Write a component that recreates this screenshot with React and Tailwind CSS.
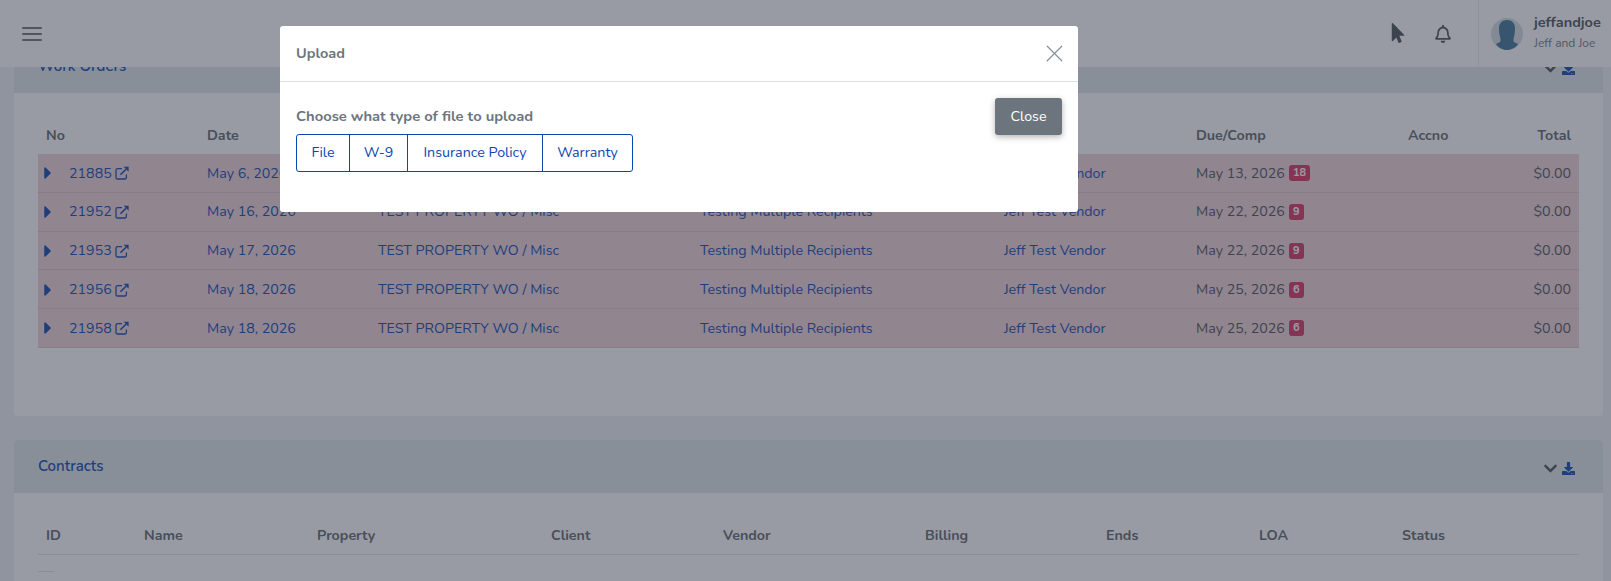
import { FaRegBell, FaCaretRight, FaChevronDown, FaDownload, FaMousePointer } from "react-icons/fa";
import { FiMenu, FiX } from "react-icons/fi";

const workOrders = [
  { no: "21885", date: "May 6, 2026", due: "May 13, 2026", days: 18 },
  { no: "21952", date: "May 16, 2026", due: "May 22, 2026", days: 9 },
  { no: "21953", date: "May 17, 2026", due: "May 22, 2026", days: 9 },
  { no: "21956", date: "May 18, 2026", due: "May 25, 2026", days: 6 },
  { no: "21958", date: "May 18, 2026", due: "May 25, 2026", days: 6 },
];

const contractCols = [
  { label: "ID", w: "w-[98px]" },
  { label: "Name", w: "w-[173px]" },
  { label: "Property", w: "w-[234px]" },
  { label: "Client", w: "w-[172px]" },
  { label: "Vendor", w: "w-[202px]" },
  { label: "Billing", w: "w-[181px]" },
  { label: "Ends", w: "w-[153px]" },
  { label: "LOA", w: "w-[143px]" },
  { label: "Status", w: "w-[100px]" },
];

const fileTypes = [
  { label: "File", w: "w-[52px]" },
  { label: "W-9", w: "w-[58px]" },
  { label: "Insurance Policy", w: "w-[135px]" },
  { label: "Warranty", w: "w-[90px]" },
];

const OpenLinkIcon = () => (
  <svg viewBox="0 0 14 14" className="ml-[3px] h-[14px] w-[14px] shrink-0" fill="none" stroke="currentColor">
    <path d="M7 2.6H2.6a1.6 1.6 0 0 0-1.6 1.6v7.2A1.6 1.6 0 0 0 2.6 13h7.2a1.6 1.6 0 0 0 1.6-1.6V8.4" strokeWidth="1.3" />
    <path d="M5.4 8.8 11 3.2" strokeWidth="1.6" />
    <path d="M8.6 0.8H13.6V5.8Z" fill="currentColor" stroke="none" />
  </svg>
);

const CardHeader = ({ title }) => (
  <div className="flex h-[53px] items-center justify-between rounded-t bg-[#e0e6ea] pl-6 pr-[28px]">
    <h2 className="text-[15px] font-semibold text-[#0b46b0]">{title}</h2>
    <div className="mt-[3px] flex items-center gap-[4px]">
      <FaChevronDown className="h-[15px] w-[15px] text-[#495057]" />
      <FaDownload className="h-[13px] w-[13px] text-[#0b46b0]" />
    </div>
  </div>
);

const WorkOrderRow = ({ row }) => (
  <div className="flex h-[38.75px] items-center border-b border-[#e2bec6] pt-px text-[#0b46b0]">
    <div className="flex w-[169px] items-center pl-[6px]">
      <FaCaretRight className="h-[20px] w-[8px] shrink-0" />
      <span className="ml-[17px]">{row.no}</span>
      <OpenLinkIcon />
    </div>
    <div className="w-[171px]">{row.date}</div>
    <div className="w-[322px]">TEST PROPERTY WO / Misc</div>
    <div className="w-[304px]">Testing Multiple Recipients</div>
    <div className="w-[192px]">Jeff Test Vendor</div>
    <div className="flex w-[212px] items-center text-[#495057]">
      {row.due}
      <span className="ml-[4px] rounded-[3px] bg-[#d63260] px-[4px] text-[11px] leading-[16px] font-bold text-white">{row.days}</span>
    </div>
    <div className="flex-1 pr-2 text-right text-[#495057]">$0.00</div>
  </div>
);

export default function App() {
  return (
    <div className="relative h-[581px] w-full overflow-hidden bg-[#eef0f5] font-['Nunito','Noto_Sans',sans-serif] text-[14.25px] text-[#495057]">
      <div className="flex flex-col gap-6 pl-[14px] pr-2 pt-10">
        <section className="h-[376px] rounded bg-white">
          <CardHeader title="Work Orders" />
          <div className="px-6 pt-[27px]">
            <div className="flex h-[34px] items-start pl-2 pt-[5px] font-bold text-[#5f666d]">
              <span className="w-[161px]">No</span>
              <span className="w-[171px]">Date</span>
              <span className="w-[322px]">Property</span>
              <span className="w-[304px]">Description</span>
              <span className="w-[192px]">Vendor</span>
              <span className="w-[212px]">Due/Comp</span>
              <span className="w-[100px]">Accno</span>
              <span className="flex-1 pr-2 text-right">Total</span>
            </div>
            <div className="bg-[#f0d2d9]">
              {workOrders.map((row) => (
                <WorkOrderRow key={row.no} row={row} />
              ))}
            </div>
          </div>
        </section>

        <section className="h-[200px] rounded bg-white">
          <CardHeader title="Contracts" />
          <div className="px-6 pt-[27px]">
            <div className="flex h-[35px] border-b border-[#dee2e6] pl-2 pt-[5px] font-bold text-[#5f666d]">
              {contractCols.map((col) => (
                <span key={col.label} className={col.w}>{col.label}</span>
              ))}
            </div>
            <div className="mt-4 h-px w-4 bg-[#dee2e6]" />
          </div>
        </section>
      </div>

      {/* fixed top bar, sits over the cards */}
      <header className="absolute inset-x-0 top-0 flex h-[67px] items-center bg-white pl-5 text-[#6c757d]">
        <FiMenu className="h-[24px] w-[24px] stroke-2" />
        <div className="ml-auto flex h-full items-center">
          <FaMousePointer className="mr-[26px] mt-[-1px] h-[20px] w-[20px] text-[#495057]" />
          <FaRegBell className="mr-[26px] h-[18px] w-[18px] text-[#495057]" />
          <div className="flex h-full w-[133px] items-center border-l border-[#e9ecef] pl-[12px]">
            <svg viewBox="0 0 32 32" className="h-8 w-8 shrink-0">
              <circle cx="16" cy="16" r="16" fill="#d4dde5" />
              <path d="M16 2c-5 0-8 3.500-8 8 0 4 .5 7 1 9 .5 2 1 3.500 0 5-1 1-3 1-4 2 2 3.500 6.500 6 11 6s9-2.500 11-6c-1-1-3-1-4-2-1-1.500-.5-3 0-5s1-5 1-9c0-4.500-3-8-8-8z" fill="#3e7398" />
            </svg>
            <div className="ml-[11px] leading-none">
              <div className="mt-[-3px] text-[14.5px] font-bold text-[#495057]">jeffandjoe</div>
              <div className="mt-[8px] text-[12px]">Jeff and Joe</div>
            </div>
          </div>
        </div>
      </header>

      {/* modal backdrop */}
      <div className="absolute inset-0 bg-[#323848]/50" />

      <div className="absolute left-[280px] top-[26px] h-[186px] w-[798px] rounded-[3px] bg-white text-[#6c757d]">
        <div className="flex h-[56px] items-center justify-between border-b border-[#dee2e6] pl-4 pr-[9px]">
          <h3 className="text-[14.5px] font-bold">Upload</h3>
          <FiX className="h-[29px] w-[29px] stroke-[1] text-[#868e96]" />
        </div>
        <div className="flex items-start justify-between pl-4 pr-[16px] pt-[16px]">
          <div>
            <p className="mt-[7px] text-[14.75px] font-bold leading-[22px]">Choose what type of file to upload</p>
            <div className="mt-[7px] flex h-[38px] w-fit rounded-[3px] border border-[#0b46b0] text-[#0b46b0]">
              {fileTypes.map((type, i) => (
                <button key={type.label} className={`${type.w} ${i > 0 ? "border-l border-[#0b46b0]" : ""}`}>{type.label}</button>
              ))}
            </div>
          </div>
          <button className="h-[37px] w-[67px] rounded-[3px] bg-[#6c757d] text-white shadow-[0_2px_6px_rgba(0,0,0,0.3)]">Close</button>
        </div>
      </div>
    </div>
  );
}
